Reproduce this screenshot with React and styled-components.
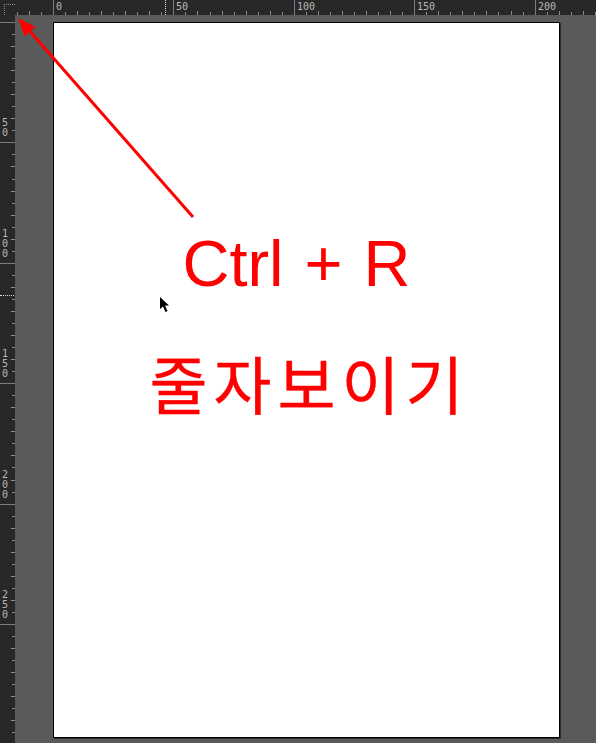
import React from "react";
import styled, { createGlobalStyle } from "styled-components";

const GlobalStyle = createGlobalStyle`
  html, body {
    margin: 0;
    padding: 0;
    background: #5a5a5a;
  }
  body {
    font-family: "Liberation Sans", Arial, sans-serif;
  }
`;

// px per ruler unit, measured from the screenshot (50 units = ~120.4px)
const SCALE = 2.408;
const ORIGIN_X = 53 - 15; // "0" on the top ruler, relative to the ruler box
const ORIGIN_Y = 22 - 15; // "0" on the left ruler, relative to the ruler box

const Frame = styled.div`
  position: relative;
  width: 596px;
  height: 743px;
  overflow: hidden;
  display: grid;
  grid-template-columns: 15px 1fr;
  grid-template-rows: 15px 1fr;
  background: #5a5a5a;
`;

const Corner = styled.div`
  position: relative;
  background: #282828;
  &::before {
    content: "";
    position: absolute;
    left: 4px;
    top: 4px;
    width: 10px;
    height: 10px;
    border-left: 1px dotted #8a8a8a;
    border-top: 1px dotted #8a8a8a;
  }
`;

const Ruler = styled.div`
  position: relative;
  overflow: hidden;
  background: #282828;
`;

const HTick = styled.span`
  position: absolute;
  bottom: 0;
  width: 1px;
  height: ${(p) => (p.$major ? 15 : p.$ten ? 4 : 3)}px;
  background: ${(p) => (p.$major ? "#7c7c7c" : "#8a8a8a")};
`;

const VTick = styled.span`
  position: absolute;
  right: 0;
  height: 1px;
  width: ${(p) => (p.$major ? 15 : p.$ten ? 4 : 3)}px;
  background: ${(p) => (p.$major ? "#7c7c7c" : "#8a8a8a")};
`;

const HLabel = styled.span`
  position: absolute;
  top: 2px;
  font-family: "DejaVu Sans Mono", "Liberation Mono", monospace;
  font-size: 10px;
  line-height: 10px;
  color: #b8b8b8;
`;

const VLabel = styled.span`
  position: absolute;
  left: 2px;
  display: flex;
  flex-direction: column;
  font-family: "DejaVu Sans Mono", "Liberation Mono", monospace;
  font-size: 10px;
  line-height: 10px;
  color: #b8b8b8;
  transform: translateY(-100%);
`;

const HCursor = styled.span`
  position: absolute;
  top: 0;
  bottom: 0;
  border-left: 1px dotted #e0e0e0;
`;

const VCursor = styled.span`
  position: absolute;
  left: 0;
  right: 1px;
  border-top: 1px dotted #e0e0e0;
`;

const Canvas = styled.div`
  padding: 7px 36px 5px 38px;
  background: #5a5a5a;
  display: flex;
`;

const Page = styled.div`
  position: relative;
  flex: 1;
  background: #ffffff;
  border: 1px solid #000;
  box-shadow: 1px 1px 0 #2c2c2c;
  display: flex;
  flex-direction: column;
  align-items: center;
`;

const Shortcut = styled.div`
  margin-top: 209px;
  margin-right: 20px;
  font-family: "Liberation Sans", Arial, sans-serif;
  font-size: 65px;
  line-height: 64px;
  word-spacing: 3px;
  color: #ff0000;
  white-space: pre;
`;

const Caption = styled.div`
  margin-top: 54px;
  padding-left: 6px;
  font-family: "Noto Sans CJK KR", "Noto Sans", sans-serif;
  font-weight: 400;
  font-size: 63px;
  line-height: 63px;
  letter-spacing: 6px;
  color: #ff0000;
  -webkit-text-stroke: 0.4px #ff0000;
`;

const Pointer = styled.svg`
  position: absolute;
  left: 106px;
  top: 274px;
`;

const Overlay = styled.svg`
  position: absolute;
  left: 0;
  top: 0;
  pointer-events: none;
`;

const range = (from, to) => {
  const out = [];
  for (let i = from; i <= to; i += 5) out.push(i);
  return out;
};

const TopRuler = () => (
  <Ruler>
    {range(-15, 230).map((u) => (
      <HTick
        key={u}
        $major={u % 50 === 0}
        $ten={u % 10 === 0}
        style={{ left: Math.round(ORIGIN_X + u * SCALE) }}
      />
    ))}
    {[0, 50, 100, 150, 200].map((u) => (
      <HLabel key={u} style={{ left: Math.round(ORIGIN_X + u * SCALE) + 3 }}>
        {u}
      </HLabel>
    ))}
    <HCursor style={{ left: 165 - 15 }} />
  </Ruler>
);

const LeftRuler = () => (
  <Ruler>
    {range(-5, 300).map((u) => (
      <VTick
        key={u}
        $major={u % 50 === 0}
        $ten={u % 10 === 0}
        style={{ top: Math.round(ORIGIN_Y + u * SCALE) }}
      />
    ))}
    {[50, 100, 150, 200, 250].map((u) => (
      <VLabel key={u} style={{ top: Math.round(ORIGIN_Y + u * SCALE) - 4 }}>
        {String(u)
          .split("")
          .map((d, i) => (
            <span key={i}>{d}</span>
          ))}
      </VLabel>
    ))}
    <VCursor style={{ top: 295 - 15 }} />
  </Ruler>
);

export default function App() {
  return (
    <>
      <GlobalStyle />
      <Frame>
        <Corner />
        <TopRuler />
        <LeftRuler />
        <Canvas>
          <Page>
            <Shortcut>Ctrl + R</Shortcut>
            <Caption>줄자보이기</Caption>
            <Pointer width="12" height="17" viewBox="0 0 12 17">
              <path d="M0 0 L0 12 L3 9.5 L5.5 15 L7.5 14 L5 8.5 L9 8.5 Z" fill="#000" />
            </Pointer>
          </Page>
        </Canvas>
        <Overlay width="596" height="743" viewBox="0 0 596 743">
          <line x1="193" y1="217" x2="27" y2="28" stroke="#ff0000" strokeWidth="3" />
          <polygon points="18,18 24.5,36.5 35.5,27" fill="#ff0000" />
        </Overlay>
      </Frame>
    </>
  );
}
